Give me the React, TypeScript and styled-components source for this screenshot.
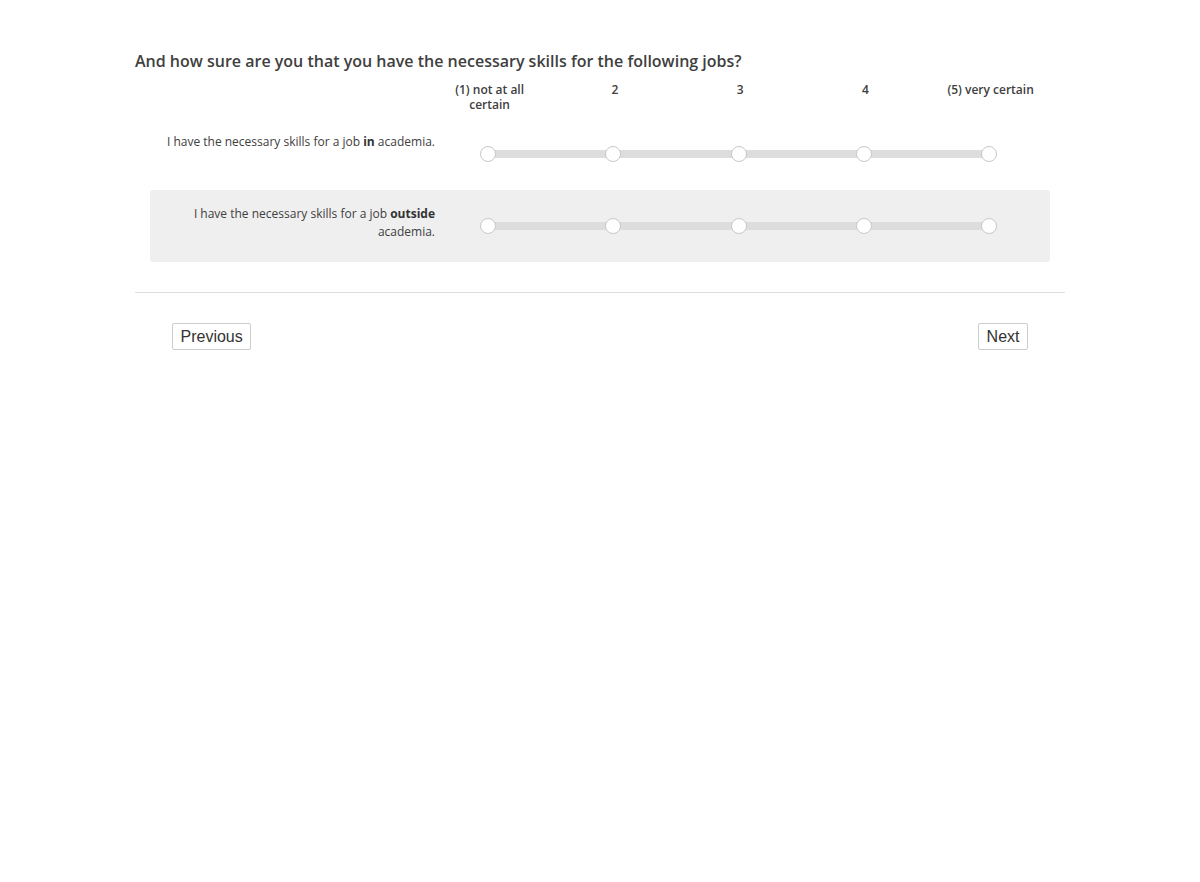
import React from "react";
import styled, { createGlobalStyle } from "styled-components";

const Global = createGlobalStyle`
  html, body { margin: 0; padding: 0; background: #fff; }
  body { font-family: "Open Sans", "Noto Sans", sans-serif; color: #404040; }
`;

const Page = styled.div`
  width: 930px;
  margin: 0 auto;
  padding-top: 50px;
`;

const Question = styled.h2`
  margin: 0;
  font-size: 16px;
  font-weight: 600;
  line-height: 22px;
  color: #404040;
`;

const Matrix = styled.div`
  padding: 0 15px;
`;

const HeaderRow = styled.div`
  display: flex;
  padding-top: 10px;
  padding-left: 277px;
`;

const HeaderCell = styled.div`
  flex: 0 0 125.25px;
  box-sizing: border-box;
  padding: 0 12px;
  text-align: center;
  font-size: 12px;
  font-weight: 600;
  line-height: 15px;
  color: #404040;
`;

const Row = styled.div<{ $shaded?: boolean }>`
  display: flex;
  align-items: flex-start;
  min-height: 72px;
  box-sizing: border-box;
  padding-top: 15px;
  margin-top: ${(p) => (p.$shaded ? "0" : "6px")};
  background: ${(p) => (p.$shaded ? "#efefef" : "transparent")};
  border-radius: 3px;
`;

const Label = styled.div`
  width: 285px;
  flex-shrink: 0;
  box-sizing: border-box;
  padding-left: 15px;
  text-align: right;
  font-size: 12px;
  line-height: 18px;
  color: #404040;
  b { font-weight: 700; color: #333; }
`;

const Scale = styled.div`
  position: relative;
  margin-top: 13px;
  margin-left: 45px;
  width: 517px;
  height: 16px;
  display: flex;
  justify-content: space-between;
  &::before {
    content: "";
    position: absolute;
    left: 8px;
    right: 8px;
    top: 4px;
    height: 8px;
    background: #dddddd;
  }
`;

const Dot = styled.span`
  position: relative;
  width: 16px;
  height: 16px;
  box-sizing: border-box;
  border-radius: 50%;
  background: #fff;
  border: 1px solid #c8c8c8;
`;

const Divider = styled.hr`
  margin: 30px 0 0;
  border: 0;
  border-top: 1px solid #dddddd;
`;

const Nav = styled.div`
  display: flex;
  justify-content: space-between;
  padding: 30px 37px 0;
`;

const NavButton = styled.button`
  font-family: "Liberation Sans", Arial, sans-serif;
  font-size: 16px;
  line-height: 18px;
  color: #333;
  background: #fff;
  border: 1px solid #cccccc;
  border-radius: 2px;
  padding: 4px 7.5px 3px;
  cursor: pointer;
`;

const columns = ["(1) not at all certain", "2", "3", "4", "(5) very certain"];

const Slider = () => (
  <Scale>
    {columns.map((c) => (
      <Dot key={c} />
    ))}
  </Scale>
);

export default function App() {
  return (
    <>
      <Global />
      <Page>
        <Question>And how sure are you that you have the necessary skills for the following jobs?</Question>
        <Matrix>
          <HeaderRow>
            {columns.map((c) => (
              <HeaderCell key={c}>{c}</HeaderCell>
            ))}
          </HeaderRow>
          <Row>
            <Label>
              I have the necessary skills for a job <b>in</b> academia.
            </Label>
            <Slider />
          </Row>
          <Row $shaded>
            <Label>
              I have the necessary skills for a job <b>outside</b> academia.
            </Label>
            <Slider />
          </Row>
        </Matrix>
        <Divider />
        <Nav>
          <NavButton>Previous</NavButton>
          <NavButton>Next</NavButton>
        </Nav>
      </Page>
    </>
  );
}
